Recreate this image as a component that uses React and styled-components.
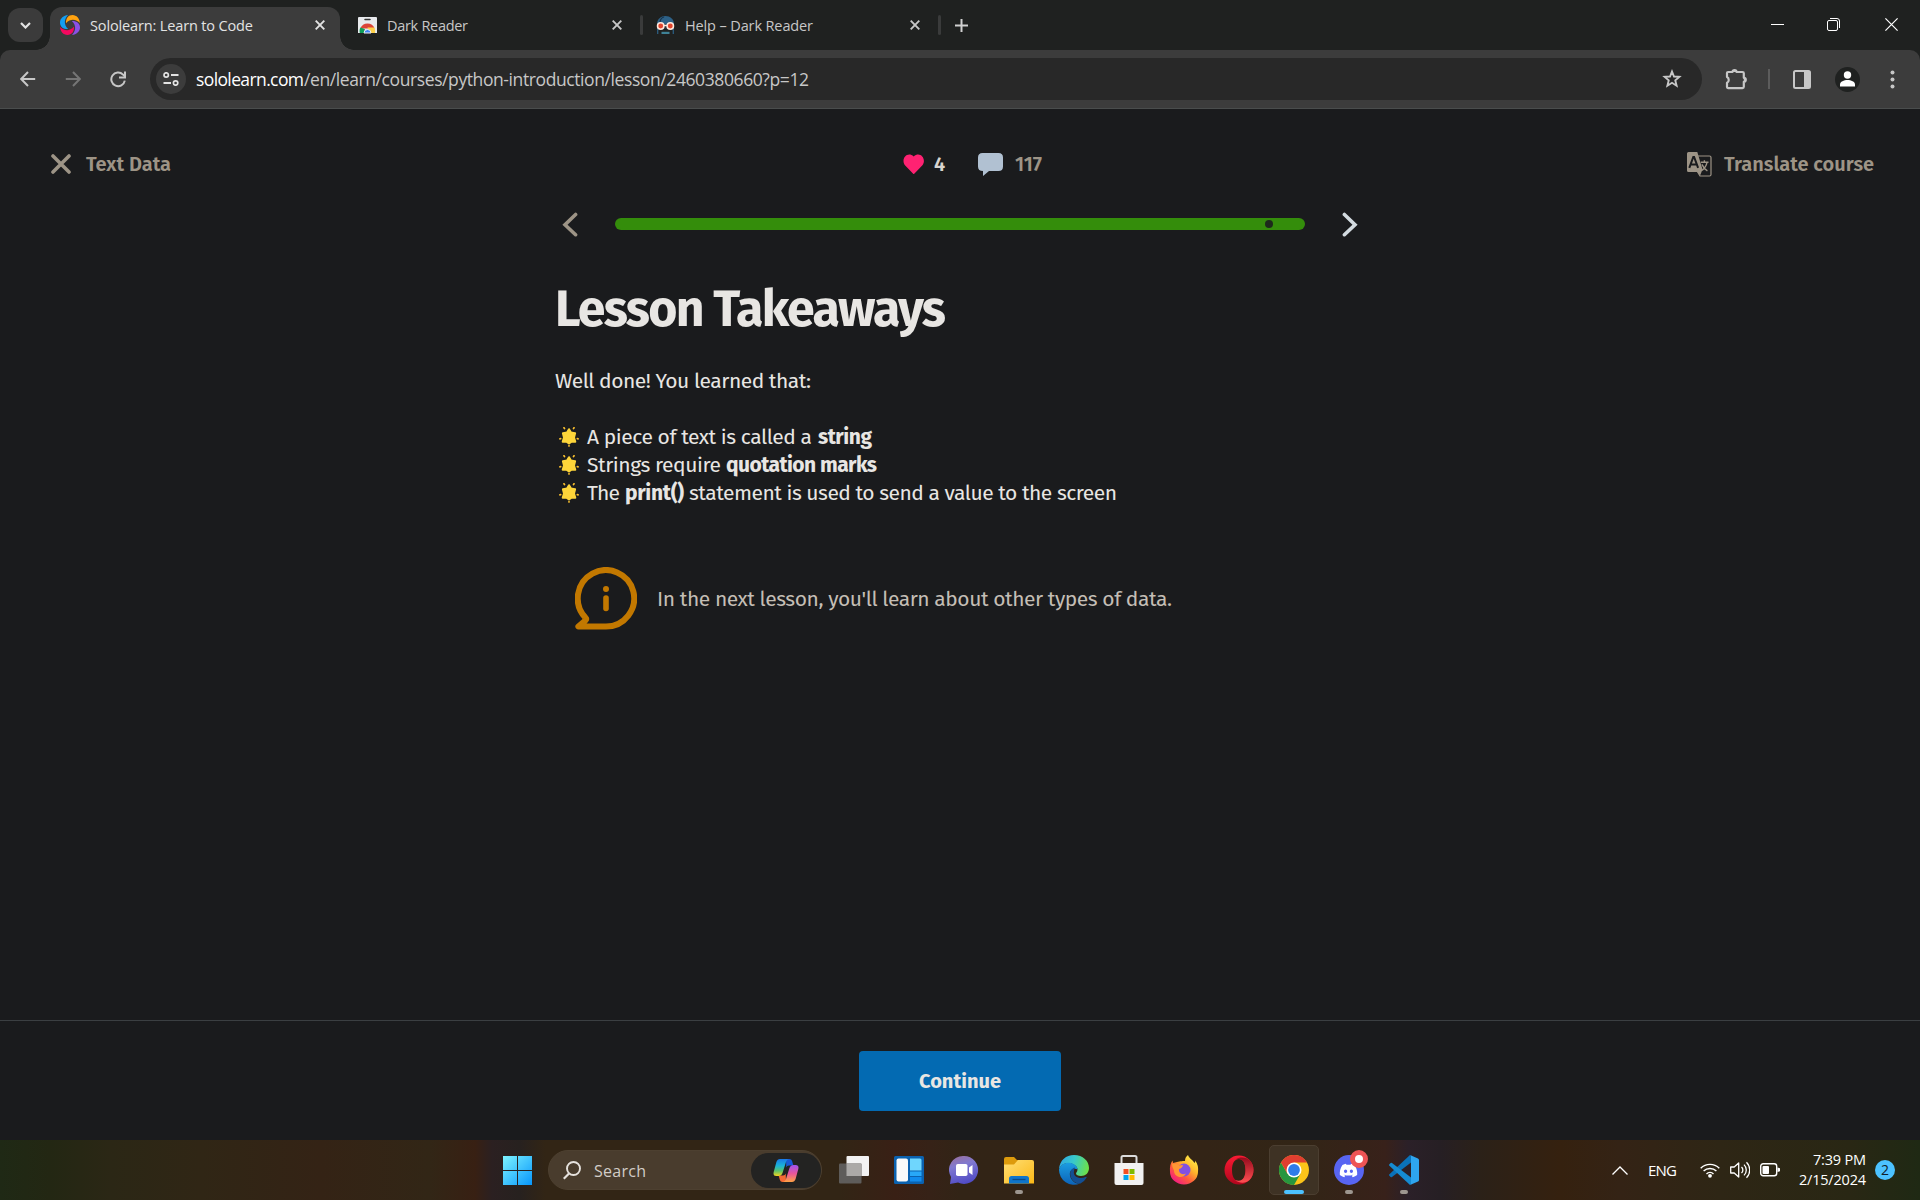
import React, { useLayoutEffect, useRef, useState } from "react";
import styled, { createGlobalStyle } from "styled-components";
import { FaDiscord } from "react-icons/fa";

const ui = '"Segoe UI", "Open Sans", "Noto Sans", sans-serif';
const body = '"Fira Sans", "Noto Sans", sans-serif';

const Global = createGlobalStyle`
  * { box-sizing: border-box; }
  body { margin: 0; background: #1a1b1d; overflow: hidden; }
  svg { display: block; flex: none; }
  button { border: 0; padding: 0; background: none; font: inherit; color: inherit; }
`;

const Label = styled.span`
  display: inline-block;
  flex: none;
  white-space: pre;
  width: ${(p) => p.$w}px;
  padding-top: ${(p) => p.$drop || 0}px;
  font-weight: ${(p) => p.$weight || "inherit"};
  color: ${(p) => p.$color || "inherit"};
`;

/* Tracks its text so that it fills exactly `w` pixels. */
function Text({ w, weight, color, drop, children }) {
  const ref = useRef(null);
  const [spacing, setSpacing] = useState(0);
  useLayoutEffect(() => {
    const natural = ref.current.getBoundingClientRect().width;
    setSpacing((w - natural) / Math.max(1, children.length - 1));
  }, [w, children]);
  return (
    <Label $w={w} $weight={weight} $color={color} $drop={drop}>
      <span ref={ref} style={{ letterSpacing: spacing }}>{children}</span>
    </Label>
  );
}

const Screen = styled.div`
  width: 1920px;
  height: 1200px;
  display: flex;
  flex-direction: column;
  background: #1a1b1d;
`;

/* ---------- browser ---------- */
const TabStrip = styled.div`
  height: 50px;
  flex: none;
  display: flex;
  align-items: center;
  background: #1f2120;
  font: 400 14.5px/20px ${ui};
  color: #c7c7c7;
`;
const TabSearch = styled.button`
  width: 35px;
  height: 34px;
  margin: 0 7px 0 8px;
  border-radius: 12px;
  background: #3b3b3b;
  display: grid;
  place-items: center;
`;
const Tab = styled.div`
  position: relative;
  width: ${(p) => p.$w}px;
  height: 43px;
  align-self: flex-end;
  display: flex;
  align-items: center;
  padding: 0 ${(p) => p.$right}px 7px ${(p) => p.$left}px;
  gap: 10px;
  border-radius: 12px 12px 0 0;
  background: ${(p) => (p.$active ? "#3c3c3c" : "transparent")};
  color: ${(p) => (p.$active ? "#e3e3e3" : "#c7c7c7")};
  &::before, &::after {
    content: ${(p) => (p.$active ? '""' : "none")};
    position: absolute;
    bottom: 0;
    width: 14px;
    height: 14px;
  }
  &::before { left: -14px; background: radial-gradient(circle at 0 0, transparent 13.5px, #3c3c3c 14px); }
  &::after { right: -14px; background: radial-gradient(circle at 100% 0, transparent 13.5px, #3c3c3c 14px); }
`;
const Grow = styled.div`flex: 1;`;
const TabDivider = styled.div`
  width: 3px;
  height: 20px;
  border-radius: 2px;
  background: #3a3b3b;
`;
const WindowButtons = styled.div`
  display: flex;
  gap: 43px;
  margin: 0 22px 2px auto;
  align-items: center;
`;
const ToolbarBack = styled.div`
  flex: none;
  background: #1f2120;
`;
const Toolbar = styled.div`
  height: 59px;
  display: flex;
  align-items: center;
  padding: 0 20px;
  border-radius: 10px 10px 0 0;
  border-bottom: 1px solid #4a4d4d;
  background: #3c3c3c;
`;
const NavButtons = styled.div`
  width: 130px;
  display: flex;
  gap: 29px;
`;
const Omnibox = styled.div`
  width: 1552px;
  height: 42px;
  border-radius: 21px;
  background: #282828;
  display: flex;
  align-items: center;
  padding: 0 20px 0 6px;
  font: 400 17.5px/24px ${ui};
  color: #c7c7c7;
`;
const SiteInfo = styled.div`
  width: 30px;
  height: 30px;
  margin-right: 10px;
  border-radius: 50%;
  background: #3c3c3c;
  display: grid;
  place-items: center;
`;
const ToolbarActions = styled.div`
  display: flex;
  align-items: center;
  margin-left: 23px;
`;
const ActionDivider = styled.div`
  width: 2px;
  height: 20px;
  margin: 0 23px 0 20px;
  background: #5c5c5c;
`;
const Avatar = styled.div`
  width: 25px;
  height: 25px;
  margin: 0 30px 0 24px;
  border-radius: 50%;
  background: #1f2120;
  display: grid;
  place-items: center;
`;

/* ---------- lesson ---------- */
const Lesson = styled.main`
  flex: 1;
  display: flex;
  flex-direction: column;
  font: 400 21px/28px ${body};
  color: #e8e6e3;
`;
const LessonHeader = styled.header`
  display: grid;
  grid-template-columns: 852px 1fr auto;
  align-items: center;
  height: 40px;
  margin-top: 35px;
  padding: 0 46px 0 51px;
  font-size: 20px;
  font-weight: 600;
  color: #9d9486;
`;
const HeaderGroup = styled.div`
  display: flex;
  align-items: center;
  gap: ${(p) => p.$gap}px;
`;
const Spacer = styled.div`width: ${(p) => p.$w}px; flex: none;`;
const ProgressRow = styled.div`
  display: flex;
  align-items: center;
  height: 40px;
  margin: 20px 0 0 562px;
`;
const Bar = styled.div`
  width: 690px;
  height: 12px;
  margin: 0 37px;
  border-radius: 6px;
  background: #348d0b;
  display: flex;
  align-items: center;
  justify-content: flex-end;
  padding-right: 32px;
`;
const Dot = styled.div`
  width: 8px;
  height: 8px;
  border-radius: 50%;
  background: #1d2a1c;
`;
const Article = styled.article`
  margin-left: 555px;
  width: 810px;
`;
const Title = styled.h1`
  margin: 35px 0 28px;
  font: 700 50px/60px ${body};
`;
const Paragraph = styled.p`margin: 0 0 28px;`;
const Takeaways = styled.ul`
  margin: 0;
  padding: 0;
  list-style: none;
`;
const Takeaway = styled.li`
  display: flex;
  align-items: center;
  height: 28px;
  padding-left: 4px;
`;
const StarSlot = styled.span`
  width: 28px;
  flex: none;
`;
const Note = styled.div`
  display: flex;
  align-items: center;
  gap: 20px;
  margin: 60px 0 0 20px;
  color: #c4beb5;
`;
const LessonFooter = styled.footer`
  flex: none;
  height: 120px;
  padding-top: 30px;
  border-top: 1px solid #3b3f42;
  display: flex;
  justify-content: center;
  align-items: flex-start;
  font: 700 20px/28px ${body};
  color: #e8e6e3;
`;
const Continue = styled.button`
  width: 202px;
  height: 60px;
  border-radius: 4px;
  background: #036ab2;
`;

/* ---------- taskbar ---------- */
const Taskbar = styled.div`
  flex: none;
  height: 60px;
  display: flex;
  align-items: center;
  padding-left: 503px;
  font: 400 15px/20px ${ui};
  color: #fff;
  background: linear-gradient(90deg, #1f2915 0, #232713 50px, #2b2715 110px, #302615 200px, #342315 320px,
    #322616 430px, #382013 475px, #2b2021 492px, #27211f 520px, #322515 545px, #322515 840px, #392015 895px,
    #362217 930px, #322416 960px, #332416 1200px, #322516 1300px, #38211a 1385px, #2b2028 1408px,
    #261f24 1440px, #2b2118 1480px, #35210f 1560px, #342315 1620px, #2e2615 1720px, #292714 1850px, #1f2914 1920px);
`;
const SearchBox = styled.div`
  width: 274px;
  height: 40px;
  margin: 0 4px 0 16px;
  padding: 0 0 0 14px;
  border: 1px solid #4d4030;
  border-radius: 20px;
  background: #493c2d;
  display: flex;
  align-items: center;
  gap: 13px;
  font-size: 16px;
  color: #d2cdc7;
`;
const CopilotPill = styled.div`
  width: 70px;
  height: 35px;
  margin-left: auto;
  border-radius: 18px;
  background: #232322;
  display: grid;
  place-items: center;
`;
const AppSlot = styled.div`
  width: 55px;
  height: 60px;
  display: flex;
  flex-direction: column;
  align-items: center;
  justify-content: center;
`;
const AppTile = styled.div`
  position: relative;
  width: 50px;
  height: 50px;
  padding-top: 9px;
  border: 1px solid ${(p) => (p.$active ? "#4b3e30" : "transparent")};
  border-radius: 5px;
  background: ${(p) => (p.$active ? "#3e3224" : "transparent")};
  display: flex;
  justify-content: center;
`;
const Running = styled.div`
  position: absolute;
  bottom: 0;
  width: ${(p) => (p.$active ? 20 : 8)}px;
  height: 4px;
  border-radius: 2px;
  background: ${(p) => (p.$active ? "#4cc2ff" : "#9d968f")};
`;
const Badge = styled.div`
  position: absolute;
  top: 4px;
  right: 5px;
  width: 18px;
  height: 18px;
  border: 5px solid #ee5455;
  border-radius: 50%;
  background: #fff;
`;
const Tray = styled.div`
  display: flex;
  align-items: center;
  margin-left: 181px;
`;
const Clock = styled.div`
  width: 67px;
  margin: 0 9px 0 19px;
  display: flex;
  flex-direction: column;
  align-items: flex-end;
  font-size: 14.5px;
`;
const Count = styled.div`
  width: 20px;
  height: 20px;
  border-radius: 50%;
  background: #4cc2ff;
  color: #10202a;
  font-size: 14px;
  text-align: center;
`;

/* ---------- drawings ---------- */
const Svg = ({ w, h = w, box, children, ...rest }) => (
  <svg width={w} height={h} viewBox={box || `0 0 ${w} ${h}`} fill="none" {...rest}>{children}</svg>
);
const Cross = ({ color = "#c7c7c7" }) => (
  <Svg w={10}><path d="M.7.7l8.6 8.6M9.3.7L.7 9.3" stroke={color} strokeWidth="1.9" /></Svg>
);
const Sololearn = () => {
  const d = "M6 8.200C5.800 3.400 8.200 0 12.600 0C16.600 0 19.600 3.600 20 8C16.600 4.600 10.800 3 6 8.200Z";
  return (
    <Svg w={20}>
      <path d={d} fill="#ffa20f" />
      <path d={d} fill="#8a50e6" transform="rotate(90 10 10)" />
      <path d={d} fill="#f5085f" transform="rotate(180 10 10)" />
      <path d={d} fill="#149ef2" transform="rotate(270 10 10)" />
    </Svg>
  );
};
const WebStore = () => (
  <Svg w={19} h={17}>
    <path d="M0 1q0-1 1-1h17q1 0 1 1v15h-19z" fill="#e8eaed" />
    <path d="M7 2.6h5" stroke="#333" strokeWidth="1.5" strokeLinecap="round" />
    <path d="M2.4 11.5a7.6 7.6 0 0 1 14.2 0z" fill="#db4437" />
    <path d="M2.4 10.5c-1 2-1 4-.6 5.5h5v-4z" fill="#0f9d58" />
    <path d="M9.5 10.5h6.8c.9 2 1 4 .7 5.5h-6z" fill="#fdd04a" />
    <path d="M6 16a3.5 3.5 0 0 1 7 0z" fill="#4285f4" stroke="#f1f1f1" strokeWidth="1" />
  </Svg>
);
const DarkReader = () => (
  <Svg w={19} h={18}>
    <path d="M1 8C1 3 5 0 9.500 0S18 3 18 8z" fill="#2d6187" />
    <path d="M4 6Q4.500 2 8 1" stroke="#17324a" strokeWidth="1.200" />
    <path d="M1.700 12v6M17.300 12v6" stroke="#2b5d80" strokeWidth="1.300" />
    <rect x="5.500" y="15.800" width="8" height="2.200" fill="#3e8296" />
    <path d="M4 8h11v5h-11z" fill="#29313a" />
    <circle cx="4.700" cy="10" r="3.200" fill="#e2452d" stroke="#ffe9dc" strokeWidth="1.500" />
    <circle cx="14.300" cy="10" r="3.200" fill="#e2452d" stroke="#ffe9dc" strokeWidth="1.500" />
    <path d="M8 9.500h3" stroke="#ffe9dc" strokeWidth="1.500" />
  </Svg>
);
const Arrow = ({ color, flip }) => (
  <Svg w={16}>
    <path transform={flip ? "translate(16 0) scale(-1 1)" : undefined} d="M15.200 8H2M8 1L1.200 8l6.800 7" stroke={color} strokeWidth="2" />
  </Svg>
);
const Reload = () => (
  <Svg w={17}>
    <path d="M14.800 9.600A6.800 6.800 0 1 1 13 3.600L14.500 5" stroke="#c7c7c7" strokeWidth="2" />
    <path d="M15 .4v6.100h-6" stroke="#c7c7c7" strokeWidth="2" />
  </Svg>
);
const Chevron = ({ color, flip }) => (
  <Svg w={16} h={26}>
    <path transform={flip ? "translate(16 0) scale(-1 1)" : undefined} d="M13.600 3.500L3 13.700l10.600 10" stroke={color} strokeWidth="3.600" strokeLinecap="round" />
  </Svg>
);
const Translate = () => (
  <Svg w={25}>
    <path d="M11 4h11.500q1.500 0 1.500 1.500v17q0 1.500-1.500 1.500h-9.500l-3-5" stroke="#9d9486" strokeWidth="1.200" />
    <path d="M1.500 0h8.800l5.200 17.500-2.400 6-2.600-3.500H1.500Q0 20 0 18.500v-17Q0 0 1.500 0z" fill="#9d9486" />
    <path d="M2.300 15.800L6.300 5h.8l4 10.800M3.700 12.500h6" stroke="#1a1b1d" strokeWidth="2" />
    <path d="M13.800 10.200h7.700M17.400 8.300v1.900M20 10.400q-1 5-5 8M14.900 12.400q2 4.400 5.500 6.500" stroke="#9d9486" strokeWidth="1.400" />
  </Svg>
);
const Star = () => (
  <Svg w={20}>
    <path d="M10 2.200l2 3.400 4.100.6-1.100 4.400 1.300 4.200-3.800-.1-2.500 1.800-2.500-1.800-3.800.1 1.300-4.200-1.100-4.400 4.100-.6z" fill="#fdd53a" stroke="#fdd53a" strokeWidth="2" strokeLinejoin="round" />
    <path d="M5 .8l.5.8M15 .8l-.5.8M.9 11.800l.8-.1M19.100 11.800l-.8-.1M10 18.700v.3" stroke="#fbc02d" strokeWidth="1.700" strokeLinecap="round" />
  </Svg>
);
const Info = () => (
  <Svg w={62} h={63}>
    <path d="M31 59.500A28.200 28.200 0 1 0 10.400 50.600Q11.800 52 10.400 53.400L3.400 59.500Z" stroke="#c27800" strokeWidth="6" strokeLinejoin="round" />
    <circle cx="31" cy="22" r="3" fill="#c27800" />
    <path d="M31 31v10.500" stroke="#c27800" strokeWidth="5.600" strokeLinecap="round" />
  </Svg>
);

const Copilot = () => (
  <Svg w={26} h={25}>
    <defs>
      <linearGradient id="cpA" x1="0" y1="0" x2="0" y2="1"><stop stopColor="#1a78e8" /><stop offset=".4" stopColor="#1ab3d8" /><stop offset=".7" stopColor="#5cc26a" /><stop offset="1" stopColor="#f4d51f" /></linearGradient>
      <linearGradient id="cpB" x1="0" y1="0" x2="0" y2="1"><stop stopColor="#a052f0" /><stop offset=".5" stopColor="#e8559b" /><stop offset="1" stopColor="#fda244" /></linearGradient>
    </defs>
    <path d="M13 1h3.500q2 0 2.600 2l1.300 4.500h-4.500q-2 0-2.600 2z" fill="#1858d6" />
    <path d="M13 24H9.500q-2 0-2.600-2l-1.300-4.500h4.500q2 0 2.600-2z" fill="#f56a35" />
    <path d="M7 1h9q-2 0-3 3l-3.500 11q-1 3-4 3H3.300q-3.500 0-2.600-4l2.700-10Q4.400 1 7 1z" fill="url(#cpA)" />
    <path d="M19 24h-9q2 0 3-3l3.500-11q1-3 4-3h2.200q3.500 0 2.600 4l-2.700 10q-1 3-3.600 3z" fill="url(#cpB)" />
  </Svg>
);
const Start = () => (
  <Svg w={29}>
    <defs><linearGradient id="win" gradientUnits="userSpaceOnUse" x1="0" y1="0" x2="29" y2="29"><stop stopColor="#7df3ff" /><stop offset="1" stopColor="#0796fb" /></linearGradient></defs>
    <path d="M0 0h14v14H0zM15 0h14v14H15zM0 15h14v14H0zM15 15h14v14H15z" fill="url(#win)" />
  </Svg>
);
const TaskView = () => (
  <Svg w={30}>
    <rect x="7.500" y="1" width="22.500" height="20" rx="1" fill="#f2f2f2" />
    <rect x="0" y="8.500" width="22.500" height="20" rx="1" fill="#5e5c5a" />
    <rect x="7.500" y="8.500" width="15" height="12.500" fill="#aba9a7" />
  </Svg>
);
const Widgets = () => (
  <Svg w={30}>
    <rect y="1" width="30" height="28" rx="1.500" fill="#0b62b0" />
    <rect x="2.500" y="3.500" width="11.500" height="23" rx="2" fill="#fafafa" />
    <path d="M16 3.500h10q1.500 0 1.500 1.500v10.500H16z" fill="#6fd6fd" />
    <path d="M16 16.500h11.500v4.500H16z" fill="#28a8f8" />
    <path d="M16 22h11.500v4.500H16z" fill="#118bed" />
  </Svg>
);
const Chat = () => (
  <Svg w={30}>
    <defs><linearGradient id="chat" x1=".2" y1="0" x2=".5" y2="1"><stop stopColor="#98709f" /><stop offset=".35" stopColor="#8179d0" /><stop offset="1" stopColor="#504bc6" /></linearGradient></defs>
    <path d="M15 1a14 14 0 1 1-6 26.600L1 29l1-7A14 14 0 0 1 15 1z" fill="url(#chat)" />
    <rect x="7" y="9" width="11.500" height="12" rx="1.800" fill="#fff" />
    <path d="M20 12.500l3.500-2.500v10l-3.500-2.500z" fill="#fff" />
  </Svg>
);
const Folder = () => (
  <Svg w={30}>
    <defs><linearGradient id="fold" x1="0" y1="0" x2="1" y2="1"><stop stopColor="#ffdf75" /><stop offset="1" stopColor="#fbb817" /></linearGradient></defs>
    <path d="M0 4q0-2 2-2h8l3 3h4v6H0z" fill="#dd9b0c" />
    <path d="M0 9.500h10l4-4.500h14q2 0 2 2v21.500H0z" fill="url(#fold)" />
    <path d="M5 28.500v-5q0-2.500 2.500-2.500h15q2.500 0 2.500 2.500v5z" fill="#0f75ca" />
    <path d="M8.500 24.500h13" stroke="#0a4a87" strokeWidth="1.300" />
  </Svg>
);
const Edge = () => (
  <Svg w={30}>
    <defs>
      <linearGradient id="edG" x1="0" y1=".2" x2="1" y2=".4"><stop stopColor="#2da6e6" /><stop offset=".5" stopColor="#39c9c9" /><stop offset="1" stopColor="#6be04c" /></linearGradient>
      <linearGradient id="edB" x1="0" y1="0" x2="0" y2="1"><stop stopColor="#1b9de2" /><stop offset="1" stopColor="#0c63b8" /></linearGradient>
    </defs>
    <path d="M0 14C1 5 7 0 15 0c9 0 15 6 15 13 0 5-3.500 8-8 8-3 0-5-1-5-2.500 0-1 1.500-1.500 1.500-4C18.500 11 14 8 9 8c-4 0-7 2-9 6z" fill="url(#edG)" />
    <path d="M0 14.500C2 9.500 6 7.500 10 7.800c5 .3 8.500 3.500 8.500 6.700-4-2-8.500 1-7.500 6 1 5 5 8.500 10 8A15 15 0 0 1 0 14.500z" fill="url(#edB)" />
    <path d="M16 12.600c-4 1-5.500 4.500-4.500 8.400 1.200 4.800 5 7.800 10 7.500q4-2 6-5.700c.4-.8-.3-1.200-1-.8-5 2.400-13 .5-11.500-6 .3-1.500 1-2.500 1-3.400z" fill="#134f93" />
  </Svg>
);
const Store = () => (
  <Svg w={30}>
    <path d="M7.500 9V2.500Q7.500 1 9 1h12q1.500 0 1.500 1.500V9" stroke="#dcdcdc" strokeWidth="2" />
    <path d="M.5 8h29v20q0 2-2 2h-25q-2 0-2-2z" fill="#f1f1f1" />
    <path d="M9.500 14h5v5h-5z" fill="#f25022" /><path d="M15.500 14h5v5h-5z" fill="#7fba00" />
    <path d="M9.500 20h5v5h-5z" fill="#00a4ef" /><path d="M15.500 20h5v5h-5z" fill="#ffb900" />
  </Svg>
);
const Firefox = () => (
  <Svg w={30}>
    <defs><linearGradient id="ff" x1=".9" y1=".1" x2=".2" y2="1"><stop stopColor="#fff04a" /><stop offset=".35" stopColor="#ffb52b" /><stop offset=".65" stopColor="#ff5a3c" /><stop offset="1" stopColor="#f0138c" /></linearGradient></defs>
    <path d="M19 0c1 3.500 5 5 6.500 8 .7-.8.800-1.500.6-2.500C29 9 29.500 13 29 17a14 12.500 0 0 1-28 0C.6 12 1.500 8 3.500 5.500L4 8l4-1c3-1 7-1 8-1 0-3 1-4.500 3-6z" fill="url(#ff)" />
    <circle cx="15" cy="15" r="6.500" fill="#8150e0" />
    <path d="M3 9q5-1 7 1.500l4-.5q-.5 3-4 4c-.5 4 3 6.500 7 4.500-3 6-12 4-12-3q-2-3-2-6.500z" fill="#ff9634" />
  </Svg>
);
const Opera = () => (
  <Svg w={30}>
    <defs>
      <linearGradient id="opA" x1="0" y1="0" x2="0" y2="1"><stop stopColor="#fa1b33" /><stop offset="1" stopColor="#b0051d" /></linearGradient>
      <linearGradient id="opB" x1="0" y1="0" x2="0" y2="1"><stop stopColor="#950b1d" /><stop offset="1" stopColor="#ff5052" /></linearGradient>
    </defs>
    <path fillRule="evenodd" d="M15 .5a14.500 14.500 0 1 1 0 29a14.500 14.500 0 1 1 0-29zM15 4C10 4 8 9 8 15s2 11 7 11 6.500-5 6.500-11S20 4 15 4z" fill="url(#opA)" />
    <path d="M11 4.700C17 .5 23 3 25.500 5a14.500 14.500 0 0 1 0 20c-4 3.500-10 3.500-14.500 0 8 3 10.500-4 10.500-10S19 2 11 4.700z" fill="url(#opB)" />
  </Svg>
);
const Chrome = () => (
  <Svg w={30}>
    <circle cx="15" cy="15" r="15" fill="#fcc419" />
    <path d="M2 7.500A15 15 0 0 0 15 30l6.500-11.300L15 15l-6.500 3.700z" fill="#27963f" />
    <path d="M2 7.500A15 15 0 0 1 28 7.500H15L8.500 18.700z" fill="#e03e30" />
    <circle cx="15" cy="15" r="7.500" fill="#fff" />
    <circle cx="15" cy="15" r="5.900" fill="#2f7cea" />
  </Svg>
);
const DiscordDisc = styled.div`
  width: 30px;
  height: 30px;
  border-radius: 50%;
  background: #5865f2;
  color: #fff;
  font-size: 19px;
  display: grid;
  place-items: center;
`;
const VSCode = () => (
  <Svg w={30}>
    <path d="M22 7.500L3 22q-.8.500-1.400 0L.4 20.800q-.7-.8 0-1.500L21 0l1.500 1z" fill="#0a72ba" />
    <path d="M22 22.500L3 8q-.8-.5-1.400 0L.4 9.200q-.7.800 0 1.500L21 30l1.500-1z" fill="#158bd2" />
    <path d="M21 0l8 3.500q1 .5 1 1.500v20q0 1-1 1.500L21 30q1 .3 1-1V1q0-1.300-1-1z" fill="#2ea5ef" />
  </Svg>
);

const apps = [
  { name: "taskview", icon: <TaskView /> },
  { name: "widgets", icon: <Widgets /> },
  { name: "chat", icon: <Chat /> },
  { name: "files", icon: <Folder />, running: true },
  { name: "edge", icon: <Edge /> },
  { name: "store", icon: <Store /> },
  { name: "firefox", icon: <Firefox /> },
  { name: "opera", icon: <Opera /> },
  { name: "chrome", icon: <Chrome />, running: true, active: true },
  { name: "discord", icon: <DiscordDisc><FaDiscord /></DiscordDisc>, running: true, badge: true },
  { name: "vscode", icon: <VSCode />, running: true },
];

const takeaways = [
  [["A piece of text is called a", 225, 400, 6], ["string", 54, 700, 0]],
  [["Strings require", 134, 400, 5], ["quotation marks", 151, 700, 0]],
  [["The", 33, 400, 5], ["print()", 59, 700, 5], ["statement is used to send a value to the screen", 428, 400, 0]],
];

const Browser = () => (
  <>
    <TabStrip>
      <TabSearch><Svg w={11} h={7}><path d="M1 1l4.500 4.500L10 1" stroke="#e3e3e3" strokeWidth="2.200" /></Svg></TabSearch>
      <Tab $active $w={290} $left={10} $right={15}>
        <Sololearn /><Text w={163} drop={2}>Sololearn: Learn to Code</Text><Grow /><Cross color="#e3e3e3" />
      </Tab>
      <Tab $w={300} $left={18} $right={18}>
        <WebStore /><Text w={81} drop={2}>Dark Reader</Text><Grow /><Cross />
      </Tab>
      <TabDivider />
      <Tab $w={295} $left={13} $right={18}>
        <DarkReader /><Text w={128} drop={2}>Help – Dark Reader</Text><Grow /><Cross />
      </Tab>
      <TabDivider />
      <Spacer $w={14} />
      <Svg w={13}><path d="M6.500 0v13M0 6.500h13" stroke="#d0d0d0" strokeWidth="2" /></Svg>
      <WindowButtons>
        <Svg w={13}><path d="M0 6.500h13" stroke="#fff" /></Svg>
        <Svg w={13}><rect x=".5" y="2.500" width="10" height="10" rx="1.500" stroke="#fff" /><path d="M3 .5h7q2.500 0 2.500 2.500v7" stroke="#fff" /></Svg>
        <Spacer $w={2} style={{ marginLeft: -43 }} />
        <Svg w={13}><path d="M.4.4l12.200 12.200M12.600.4L.4 12.600" stroke="#fff" strokeWidth="1.200" /></Svg>
      </WindowButtons>
    </TabStrip>
    <ToolbarBack>
      <Toolbar>
        <NavButtons><Arrow color="#c7c7c7" /><Arrow color="#757575" flip /><Reload /></NavButtons>
        <Omnibox>
          <SiteInfo>
            <Svg w={16} h={14}>
              <path d="M8 3h7.500M.5 11H8" stroke="#e3e3e3" strokeWidth="2" />
              <circle cx="3.200" cy="3" r="2.200" stroke="#e3e3e3" strokeWidth="1.700" />
              <circle cx="12.600" cy="11" r="2.200" stroke="#e3e3e3" strokeWidth="1.700" />
            </Svg>
          </SiteInfo>
          <Text w={108} color="#fff">sololearn.com</Text>
          <Text w={505}>/en/learn/courses/python-introduction/lesson/2460380660?p=12</Text>
          <Grow />
          <Svg w={20}><path d="M10 2.500l2 5 5.400.4-4.100 3.500 1.300 5.300-4.600-2.900-4.600 2.900 1.300-5.300L2.600 7.900 8 7.500z" stroke="#c7c7c7" strokeWidth="1.900" /></Svg>
        </Omnibox>
        <ToolbarActions>
          <Svg w={23}>
            <path d="M3 4h4.500a2 2 0 0 1 4 0h6q1.300 0 1.300 1.300v4.500a2 2 0 0 1 0 4v5q0 1.300-1.300 1.300H3q-1 0-1-1v-4.300a3.300 3.300 0 0 0 0-5.800V5q0-1 1-1z" stroke="#c7c7c7" strokeWidth="2.200" strokeLinejoin="round" />
            <path d="M7.200 4a2.300 2.300 0 0 1 4.600 0zM18.800 9.500a2.300 2.300 0 0 1 0 4.600z" fill="#c7c7c7" />
          </Svg>
          <ActionDivider />
          <Svg w={18} h={19}><rect x="1" y="1" width="16" height="17" rx="1.500" stroke="#c7c7c7" strokeWidth="2" /><path d="M11 1h6v17h-6z" fill="#c7c7c7" /></Svg>
          <Avatar><Svg w={15} h={16}><circle cx="7.500" cy="4" r="3.700" fill="#fff" /><path d="M0 15.500v-2C0 10.500 4 9 7.500 9s7.500 1.500 7.500 4.500v2z" fill="#fff" /></Svg></Avatar>
          <Svg w={5} h={19}><g fill="#c7c7c7"><circle cx="2.500" cy="2.500" r="2" /><circle cx="2.500" cy="9.500" r="2" /><circle cx="2.500" cy="16.500" r="2" /></g></Svg>
        </ToolbarActions>
      </Toolbar>
    </ToolbarBack>
  </>
);

export default function App() {
  return (
    <Screen>
      <Global />
      <Browser />
      <Lesson>
        <LessonHeader>
          <HeaderGroup $gap={15}>
            <Svg w={20}><path d="M2 2l16 16M18 2L2 18" stroke="#9d9486" strokeWidth="3.600" strokeLinecap="round" /></Svg>
            <Text w={85}>Text Data</Text>
          </HeaderGroup>
          <HeaderGroup $gap={10}>
            <Svg w={21} h={20}><path d="M10.700 20.300L2.200 11.600C-2.800 5.300 4.200-3.200 10.700 2.500 17.200-3.200 24.200 5.300 19.200 11.600z" fill="#ff2272" /></Svg>
            <Text w={11} color="#d8d4cf">4</Text>
            <Spacer $w={13} />
            <Svg w={25} h={23}><path d="M4.500 0h16q4.500 0 4.500 4.500v9q0 4.500-4.500 4.500H11l-6 5v-5q-5 0-5-4.500v-9Q0 0 4.500 0z" fill="#b1c1d2" /></Svg>
            <Spacer $w={2} style={{ marginLeft: -10 }} />
            <Text w={27}>117</Text>
          </HeaderGroup>
          <HeaderGroup $gap={12}>
            <Translate />
            <Text w={150}>Translate course</Text>
          </HeaderGroup>
        </LessonHeader>
        <ProgressRow>
          <Chevron color="#9d9486" />
          <Bar><Dot /></Bar>
          <Chevron color="#d3dbe0" flip />
        </ProgressRow>
        <Article>
          <Title><Text w={391}>Lesson Takeaways</Text></Title>
          <Paragraph><Text w={256}>Well done! You learned that:</Text></Paragraph>
          <Takeaways>
            {takeaways.map((parts, i) => (
              <Takeaway key={i}>
                <StarSlot><Star /></StarSlot>
                {parts.map(([text, w, weight, gap]) => (
                  <React.Fragment key={text}>
                    <Text w={w} weight={weight}>{text}</Text>
                    <Spacer $w={gap} />
                  </React.Fragment>
                ))}
              </Takeaway>
            ))}
          </Takeaways>
          <Note><Info /><Text w={515}>In the next lesson, you'll learn about other types of data.</Text></Note>
        </Article>
      </Lesson>
      <LessonFooter><Continue><Text w={82}>Continue</Text></Continue></LessonFooter>
      <Taskbar>
        <Start />
        <SearchBox>
          <Svg w={18} h={19}><circle cx="10.500" cy="7.500" r="6.500" stroke="#e6e2de" strokeWidth="1.900" /><path d="M6 12.500L.8 17.800" stroke="#e6e2de" strokeWidth="2.200" /></Svg>
          <Text w={52} drop={1}>Search</Text>
          <CopilotPill><Copilot /></CopilotPill>
        </SearchBox>
        {apps.map((a) => (
          <AppSlot key={a.name}>
            <AppTile $active={a.active}>
              {a.icon}
              {a.badge && <Badge />}
              {a.running && <Running $active={a.active} />}
            </AppTile>
          </AppSlot>
        ))}
        <Tray>
          <Svg w={16} h={9}><path d="M.5 8.500L8 1l7.500 7.500" stroke="#fff" strokeWidth="1.300" /></Svg>
          <Spacer $w={20} />
          <Text w={29}>ENG</Text>
          <Spacer $w={23} />
          <Svg w={20} h={16}>
            <path d="M.7 6.200a13.200 13.200 0 0 1 18.600 0M3.600 9.100a9 9 0 0 1 12.800 0M6.500 12a5 5 0 0 1 7 0" stroke="#fff" strokeWidth="1.400" />
            <circle cx="10" cy="13.800" r="1.900" fill="#fff" />
          </Svg>
          <Spacer $w={10} />
          <Svg w={20} h={18}>
            <path d="M.7 6h3.500l4.500-4v14l-4.500-4H.7z" stroke="#fff" strokeWidth="1.300" strokeLinejoin="round" />
            <path d="M11.500 6a4 4 0 0 1 0 6M14 3.600a7.500 7.500 0 0 1 0 10.800M16.500 1.200a11 11 0 0 1 0 15.600" stroke="#fff" strokeWidth="1.300" />
          </Svg>
          <Spacer $w={10} />
          <Svg w={20} h={14}>
            <rect x=".7" y=".7" width="16" height="12" rx="2.500" stroke="#fff" strokeWidth="1.400" />
            <rect x="2.500" y="3" width="6.500" height="8" rx="1" fill="#fff" /><path d="M17.500 4.500l2.500.7v3l-2.500.8z" fill="#fff" />
          </Svg>
          <Clock><Text w={53}>7:39 PM</Text><Text w={67}>2/15/2024</Text></Clock>
          <Count>2</Count>
        </Tray>
      </Taskbar>
    </Screen>
  );
}
